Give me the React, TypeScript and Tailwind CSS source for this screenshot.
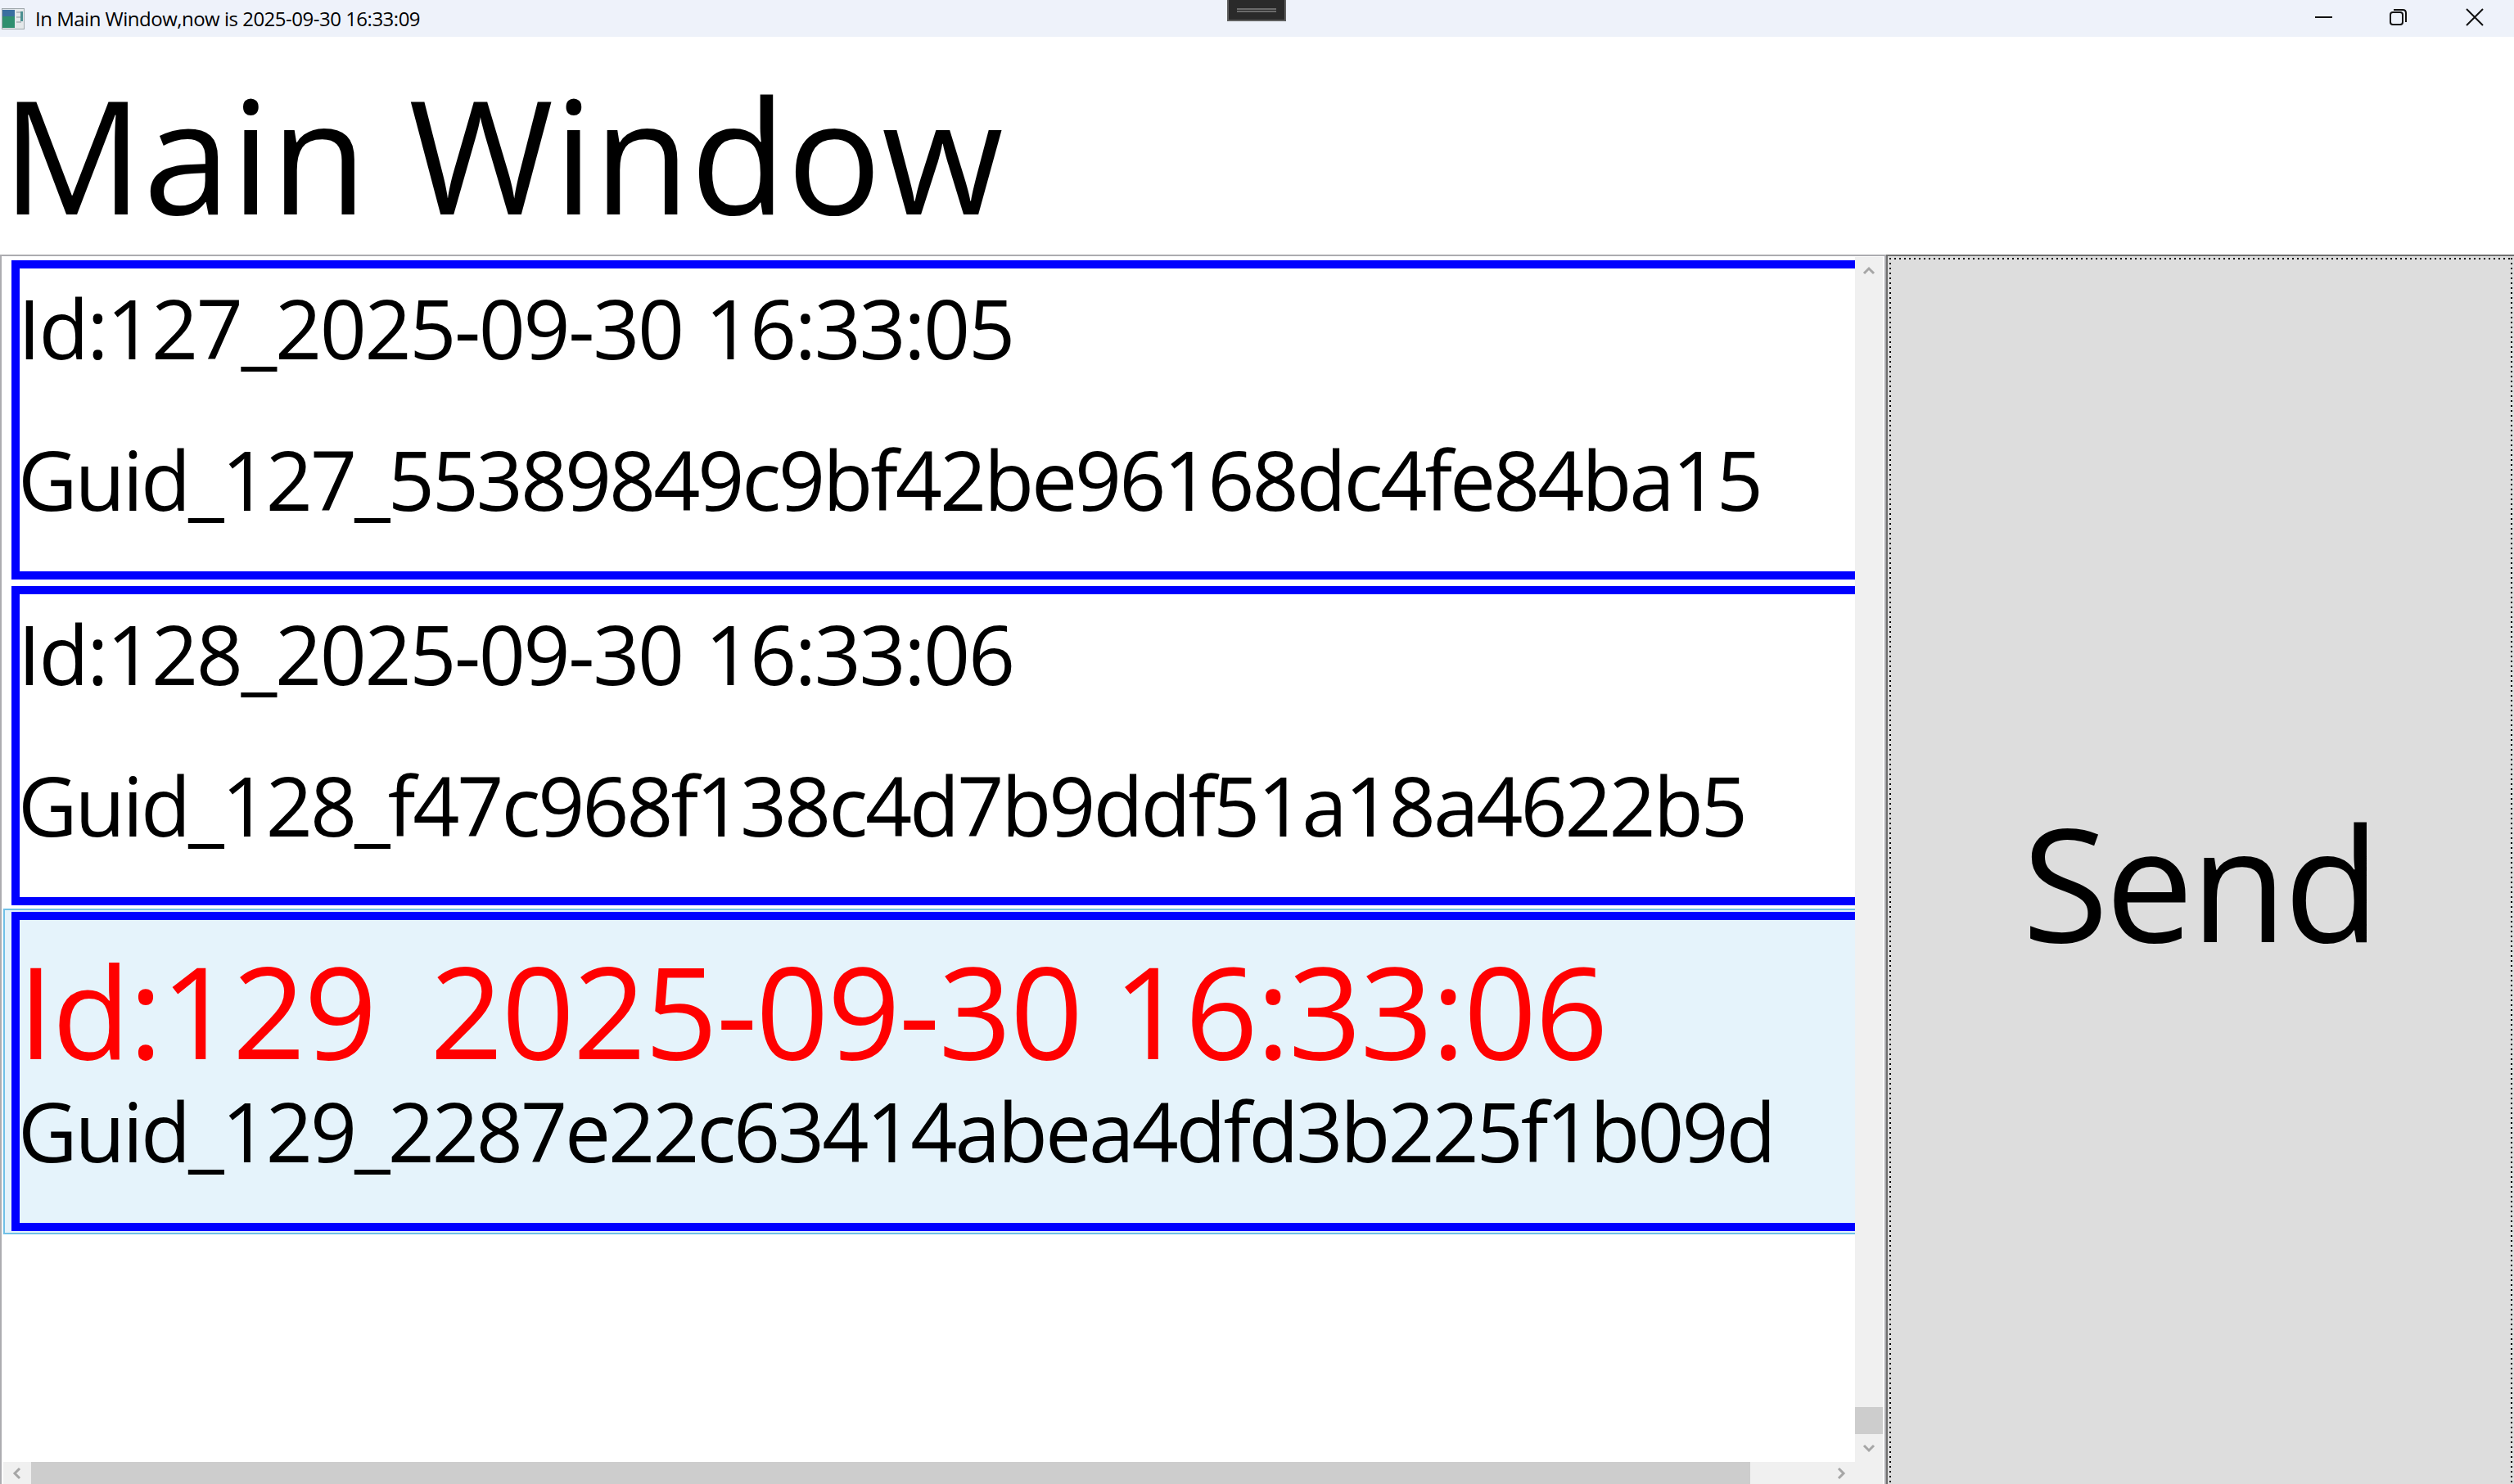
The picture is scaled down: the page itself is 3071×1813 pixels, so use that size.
const font = { fontFamily: '"Open Sans", sans-serif' };

function Arrow({ d, className }: { d: string; className: string }) {
  return (
    <svg viewBox="0 0 16 16" className={className} fill="none" stroke="#a6a6a6" strokeWidth="3">
      <path d={d} />
    </svg>
  );
}

function Item({ id, guid, selected }: { id: string; guid: string; selected?: boolean }) {
  return (
    <div className={`border-2 py-[2px] pl-[8px] w-[2600px] ${selected ? 'border-[#70c0e7] bg-[#e5f3fb]' : 'border-transparent'}`}>
      <div className="border-[10px] border-[#0000ff] h-[390px] flex flex-col">
        <div className="h-[185px]">
          <div className={selected ? 'h-[178px] overflow-hidden -ml-[2px] text-[156px] leading-[220px] text-[#ff0000] tracking-[-1.8px]' : 'h-[176px] overflow-hidden -ml-[2px] text-[100px] leading-[144px] text-black tracking-[-2.4px] [word-spacing:4px]'}>{id}</div>
        </div>
        <div className="h-[185px] overflow-hidden -ml-[2px] text-[100px] leading-[144px] text-black tracking-[-3.1px]">{guid}</div>
      </div>
    </div>
  );
}

export default function App() {
  return (
    <div className="w-[3071px] h-[1813px] overflow-hidden bg-white flex flex-col" style={font}>
      <div className="h-[45px] shrink-0 bg-[#eef2fa] flex items-center relative">
        <svg viewBox="0 0 28 26" className="w-[28px] h-[26px] ml-[2px]">
          <rect x="0.5" y="0.5" width="27" height="25" fill="#e4e8ea" stroke="#a0a8ac" />
          <rect x="1" y="2" width="15" height="22" fill="#2f8f6f" />
          <rect x="1" y="2" width="15" height="8" fill="#3a6fa0" />
          <rect x="18" y="4" width="6" height="2" fill="#b8bec2" />
          <rect x="18" y="10" width="6" height="2" fill="#b8bec2" />
          <rect x="18" y="16" width="6" height="2" fill="#b8bec2" />
          <rect x="23" y="4" width="3" height="12" fill="#4a8f90" />
        </svg>
        <span className="ml-[13px] text-[24px] text-black tracking-[-0.5px]">In Main Window,now is 2025-09-30 16:33:09</span>
        <div className="absolute left-[1499px] top-0 w-[72px] h-[26px] bg-[#2a2a2a] border-2 border-t-0 border-[#5e5e5e] flex flex-col items-center pt-[10px] gap-[1px]">
          <div className="w-[48px] h-[2px] bg-[#6a6a6a]" />
          <div className="w-[48px] h-[2px] bg-[#6a6a6a]" />
        </div>
        <svg className="absolute left-[2828px] top-[10px] w-[22px] h-[22px]" viewBox="0 0 22 22" fill="none" stroke="#111" strokeWidth="2">
          <path d="M0 11H21" />
        </svg>
        <svg className="absolute left-[2919px] top-[10px] w-[22px] h-[22px]" viewBox="0 0 22 22" fill="none" stroke="#111" strokeWidth="2">
          <rect x="1" y="5" width="15" height="15" rx="3" />
          <path d="M5 2H16C19 2 20 3 20 6V17" />
        </svg>
        <svg className="absolute left-[3012px] top-[10px] w-[22px] h-[22px]" viewBox="0 0 22 22" fill="none" stroke="#111" strokeWidth="2">
          <path d="M1 1L21 21M21 1L1 21" />
        </svg>
      </div>
      <div className="h-[266px] shrink-0 pl-[2px] pt-[23px] text-[192px] leading-[240px] text-black tracking-[0.3px]">Main Window</div>
      <div className="flex-1 min-h-0 flex">
        <div className="w-[2304px] border-2 border-b-0 border-[#acacb0] flex flex-col min-h-0">
          <div className="flex-1 min-h-0 flex pt-[1px] pl-[2px] pr-[2px]">
            <div className="flex-1 min-w-0 overflow-hidden flex flex-col">
              <Item id="Id:127_2025-09-30 16:33:05" guid="Guid_127_55389849c9bf42be96168dc4fe84ba15" />
              <Item id="Id:128_2025-09-30 16:33:06" guid="Guid_128_f47c968f138c4d7b9ddf51a18a4622b5" />
              <Item id="Id:129_2025-09-30 16:33:06" guid="Guid_129_2287e22c63414abea4dfd3b225f1b09d" selected />
            </div>
            <div className="w-[34px] shrink-0 bg-[#f0f0f0] flex flex-col items-center">
              <div className="h-[34px] flex items-center justify-center"><Arrow d="M2 11L8 5L14 11" className="w-[16px] h-[16px]" /></div>
              <div className="flex-1" />
              <div className="w-full h-[33px] bg-[#cdcdcd]" />
              <div className="h-[34px] flex items-center justify-center"><Arrow d="M2 5L8 11L14 5" className="w-[16px] h-[16px]" /></div>
            </div>
          </div>
          <div className="h-[27px] shrink-0 mx-[2px] flex bg-[#f0f0f0]">
            <div className="w-[34px] flex items-center justify-center"><Arrow d="M11 2L5 8L11 14" className="w-[16px] h-[16px]" /></div>
            <div className="w-[2100px] bg-[#cdcdcd]" />
            <div className="flex-1" />
            <div className="w-[34px] flex items-center justify-center"><Arrow d="M5 2L11 8L5 14" className="w-[16px] h-[16px]" /></div>
            <div className="w-[34px]" />
          </div>
        </div>
        <div className="flex-1 border-2 border-b-0 border-r-0 border-[#707070] bg-[#dddddd] p-[2px] pb-0">
          <div className="relative h-full flex items-center justify-center pt-[26px] pr-[3px] text-[192px] leading-[260px] text-black tracking-[-3.7px]">
            <div className="absolute left-0 right-0 top-0 h-[2px] bg-[repeating-linear-gradient(90deg,#000_0,#000_2px,transparent_2px,transparent_6px)]" />
            <div className="absolute left-0 top-0 bottom-0 w-[2px] bg-[repeating-linear-gradient(180deg,#000_0,#000_2px,transparent_2px,transparent_6px)]" />
            <div className="absolute right-0 top-0 bottom-0 w-[2px] bg-[repeating-linear-gradient(180deg,#000_0,#000_2px,transparent_2px,transparent_6px)]" />
            Send
          </div>
        </div>
      </div>
    </div>
  );
}
